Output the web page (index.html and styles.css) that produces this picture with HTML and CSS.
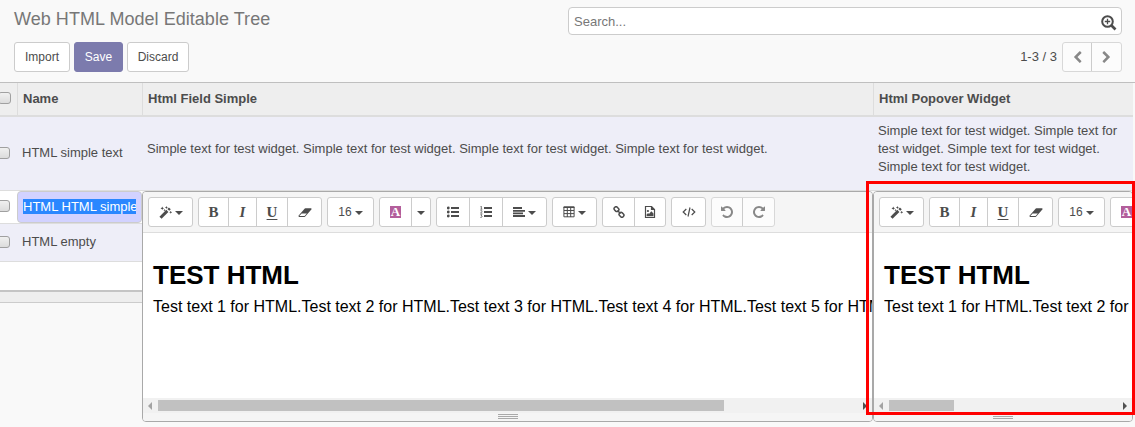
FILE: index.html
```html
<!DOCTYPE html>
<html lang="en">
<head>
<meta charset="utf-8">
<title>Web HTML Model Editable Tree</title>
<link rel="stylesheet" href="styles.css">
</head>
<body>
<svg class="sprite" aria-hidden="true">
  <symbol id="magic" viewBox="0 0 14 14"><path d="M1.600 12.600L9 5.200" stroke-width="3.200"/><path d="M10 4.200l1.700-1.700" stroke-width="2.800"/><path class="f" d="M3.500.6l.6 1.300 1.300.6-1.300.6-.6 1.300-.6-1.300L1.600 2.500l1.300-.6zM8 0l.5 1.100 1.100.5-1.100.5L8 3.200l-.5-1.100-1.100-.5 1.100-.5zM12.600 5.200l.5 1.100 1.100.5-1.100.5-.5 1.100-.5-1.100-1.100-.5 1.100-.5zM6 3.200l.4.900.9.400-.9.400-.4.900-.4-.9-.9-.4.900-.4z"/></symbol>
  <symbol id="eraser" viewBox="0 0 2048 1792"><path class="f" d="M960 1408l336-384h-768l-336 384h768zm1013-1077q15 34 9.500 71.500t-30.500 65.500l-896 1024q-38 44-96 44h-768q-38 0-69.500-20.500t-47.500-54.500q-15-34-9.500-71.500t30.500-65.500l896-1024q38-44 96-44h768q38 0 69.500 20.500t47.500 54.500z"/></symbol>
  <symbol id="ul" viewBox="0 0 12 12"><path class="f" d="M4 1h8v2H4zM4 5h8v2H4zM4 9h8v2H4z"/><circle class="f" cx="1.300" cy="2" r="1.400"/><circle class="f" cx="1.300" cy="6" r="1.400"/><circle class="f" cx="1.300" cy="10" r="1.400"/></symbol>
  <symbol id="ol" viewBox="0 0 12 12"><path class="f" d="M4 1h8v2H4zM4 5h8v2H4zM4 9h8v2H4z"/><path d="M.4.8L1.400.2v3M.4 3.200h2M.4 4.700h1.500v1L.5 7.200h1.900M.4 8.700h1.600L1.200 9.800q1 0 .9.900T.3 11.400" stroke-width=".7"/></symbol>
  <symbol id="align" viewBox="0 0 12 12"><path class="f" d="M0 1h9v2H0zM0 4h12v1.700H0zM0 6.500h10v1.700H0zM0 9h12v2H0z"/></symbol>
  <symbol id="table" viewBox="0 0 12 12"><path d="M.9 1h10.200v9.800H.9zM1 4.500h10M1 7.600h10M4.300 2v9M7.700 2v9" stroke-width="1"/><path class="f" d="M.6.500h10.800v1.500H.6z"/></symbol>
  <symbol id="link" viewBox="0 0 12 12"><rect x="1" y="1.300" width="5" height="3.800" rx="1.700" transform="rotate(45 3.500 3.200)" stroke-width="1.500"/><rect x="6" y="6.900" width="5" height="3.800" rx="1.700" transform="rotate(45 8.500 8.800)" stroke-width="1.500"/><path d="M4.500 4.500l3 3" stroke-width="1.500"/></symbol>
  <symbol id="image" viewBox="0 0 12 12"><path d="M1.500.5h6L10.500 3.500v8h-9zM7.500.5v3h3" stroke-width="1.200"/><path class="f" d="M2.600 10.200V8.500l1.500-1.500.9.900 2.300-2.600 2.200 2.200v2.700z"/><circle class="f" cx="3.900" cy="5" r="1.100"/></symbol>
  <symbol id="code" viewBox="0 0 14 12"><path d="M4.300 3L1.200 6l3.100 3M9.700 3l3.100 3-3.100 3M8 1.500L6 10.500" stroke-width="1.200"/></symbol>
  <symbol id="undo" viewBox="0 0 1792 1792"><path class="f" d="M1664 896q0 156-61 298t-164 245-245 164-298 61q-172 0-327-72.500t-264-204.500q-7-10-6.500-22.500t8.500-20.500l137-138q10-9 25-9 16 2 23 12 73 95 179 147t225 52q104 0 198.500-40.500t163.500-109.500 109.500-163.500 40.500-198.500-40.500-198.500-109.500-163.500-163.500-109.500-198.500-40.500q-98 0-188 35.500t-160 101.500l137 138q31 30 14 69-17 40-59 40h-448q-26 0-45-19t-19-45v-448q0-42 40-59 39-17 69 14l130 129q107-101 244.500-156.500t284.500-55.500q156 0 298 61t245 164 164 245 61 298z"/></symbol>
  <symbol id="left" viewBox="0 0 1792 1792"><path class="f" d="M1427 301l-531 531 531 531q19 19 19 45t-19 45l-166 166q-19 19-45 19t-45-19l-742-742q-19-19-19-45t19-45l742-742q19-19 45-19t45 19l166 166q19 19 19 45t-19 45z"/></symbol>
  <symbol id="zoom" viewBox="0 0 16 16"><circle cx="6.500" cy="6.500" r="5.300" stroke-width="2"/><path d="M10.500 10.500l4 4" stroke-width="2.600"/><path d="M6.500 3.800v5.400M3.800 6.500h5.400" stroke-width="1.300"/></symbol>
</svg>

<header class="panel">
  <div class="panel-row">
    <h1 class="title">Web HTML Model Editable Tree</h1>
    <div class="search"><span>Search...</span><svg class="ic zoom"><use href="#zoom"/></svg></div>
  </div>
  <div class="panel-row second">
    <div class="actions"><div class="btn import">Import</div><div class="btn save">Save</div><div class="btn discard">Discard</div></div>
    <div class="pager"><span>1-3 / 3</span><div class="group muted"><div class="b w28"><svg class="ic"><use href="#left"/></svg></div><div class="b w29"><svg class="ic flip"><use href="#left"/></svg></div></div></div>
  </div>
</header>

<main class="table">
  <div class="row head"><div class="cell check"><i class="box"></i></div><div class="cell">Name</div><div class="cell">Html Field Simple</div><div class="cell">Html Popover Widget</div></div>
  <div class="row first"><div class="cell check"><i class="box"></i></div><div class="cell label">HTML simple text</div><div class="cell simple">Simple text for test widget. Simple text for test widget. Simple text for test widget. Simple text for test widget.</div><div class="cell wrap">Simple text for test widget. Simple text for test widget. Simple text for test widget. Simple text for test widget.</div></div>
  <div class="lower">
    <div class="side">
      <div class="srow edit"><div class="check"><i class="box"></i></div><div class="input"><span class="sel">HTML HTML simple</span></div></div>
      <div class="srow odd"><div class="check"><i class="box"></i></div><div class="name">HTML empty</div></div>
      <div class="srow blank"></div>
      <div class="foot"></div>
    </div>

    <section class="editor one">
      <div class="toolbar">
        <div class="group"><div class="b w43"><svg class="ic"><use href="#magic"/></svg><i class="caret"></i></div></div>
        <div class="group"><div class="b w29 serif">B</div><div class="b w27 serif it">I</div><div class="b w30 serif un">U</div><div class="b w33"><svg class="ic er"><use href="#eraser"/></svg></div></div>
        <div class="group"><div class="b w45">16<i class="caret"></i></div></div>
        <div class="group"><div class="b w31"><span class="color">A</span></div><div class="b w18"><i class="caret solo"></i></div></div>
        <div class="group"><div class="b w32"><svg class="ic s12"><use href="#ul"/></svg></div><div class="b w32"><svg class="ic s12"><use href="#ol"/></svg></div><div class="b w43"><svg class="ic s12"><use href="#align"/></svg><i class="caret"></i></div></div>
        <div class="group"><div class="b w43"><svg class="ic s12"><use href="#table"/></svg><i class="caret"></i></div></div>
        <div class="group"><div class="b w31"><svg class="ic s12"><use href="#link"/></svg></div><div class="b w30"><svg class="ic s12"><use href="#image"/></svg></div></div>
        <div class="group"><div class="b w33"><svg class="ic code"><use href="#code"/></svg></div></div>
        <div class="group muted"><div class="b w30"><svg class="ic turn"><use href="#undo"/></svg></div><div class="b w31"><svg class="ic turn flip"><use href="#undo"/></svg></div></div>
      </div>
      <div class="doc"><h2>TEST HTML</h2><p>Test text 1 for HTML.Test text 2 for HTML.Test text 3 for HTML.Test text 4 for HTML.Test text 5 for HTML.</p></div>
      <div class="scroll"><i class="arrow back"></i><div class="track"><div class="thumb long"></div></div><i class="arrow fwd"></i></div>
      <div class="resize"><i class="grip"></i></div>
    </section>

    <section class="editor two">
      <div class="toolbar">
        <div class="group"><div class="b w43"><svg class="ic"><use href="#magic"/></svg><i class="caret"></i></div></div>
        <div class="group"><div class="b w29 serif">B</div><div class="b w27 serif it">I</div><div class="b w30 serif un">U</div><div class="b w33"><svg class="ic er"><use href="#eraser"/></svg></div></div>
        <div class="group"><div class="b w45">16<i class="caret"></i></div></div>
        <div class="group"><div class="b w31"><span class="color">A</span></div><div class="b w18"><i class="caret solo"></i></div></div>
      </div>
      <div class="doc"><h2>TEST HTML</h2><p>Test text 1 for HTML.Test text 2 for</p></div>
      <div class="scroll"><i class="arrow back"></i><div class="track"><div class="thumb short"></div></div><i class="arrow fwd"></i></div>
      <div class="resize"><i class="grip"></i></div>
    </section>
  </div>
</main>
<div class="highlight"></div>
</body>
</html>
```
FILE: styles.css
```css
* { box-sizing: border-box; }
body { margin: 0; height: 427px; overflow: hidden; position: relative; background: #f9f9f9; color: #4c4c4c; font: 13px/18px "Liberation Sans", Arial, sans-serif; }
.sprite { display: none; }
.ic { width: 13px; height: 13px; flex: none; fill: none; stroke: currentColor; }
.f { fill: currentColor; stroke: none; }
.flip { transform: scaleX(-1); }

.panel { height: 83px; padding: 7px 13px 0 14px; border-bottom: 1px solid #bfbfbf; }
.panel-row { display: flex; justify-content: space-between; height: 28px; }
.panel-row.second { height: 30px; margin-top: 7px; }
.title { margin: 0; font-size: 18px; font-weight: 400; line-height: 24px; letter-spacing: .04px; color: #777; }
.search { width: 554px; height: 28px; padding: 0 4px 0 5px; display: flex; align-items: center; justify-content: space-between; background: #fff; border: 1px solid #ccc; border-radius: 4px; color: #777; }
.search span { padding-top: 1px; }
.zoom { width: 16px; height: 16px; color: #4c4c4c; margin-top: 3px; }
.actions { display: flex; gap: 4px; }
.btn { height: 30px; border: 1px solid #ccc; border-radius: 3px; background: #fff; font-size: 12px; line-height: 28px; text-align: center; }
.import { width: 56px; }
.save { width: 49px; background: #7c7bad; border-color: #7c7bad; color: #fff; }
.discard { width: 62px; }
.pager { display: flex; align-items: center; gap: 5px; }

.group { display: flex; flex: none; height: 30px; border: 1px solid #ccc; border-radius: 3px; background: #fff; }
.b { display: flex; align-items: center; justify-content: center; flex: none; font-size: 12px; }
.b + .b { border-left: 1px solid #ccc; box-sizing: content-box; }
.muted { color: #888; background: #fcfcfc; border-color: #d8d8d8; }
.w18 { width: 18px; } .w27 { width: 27px; } .w28 { width: 28px; } .w29 { width: 29px; } .w30 { width: 30px; }
.w31 { width: 31px; } .w32 { width: 32px; } .w33 { width: 33px; } .w43 { width: 43px; } .w45 { width: 45px; }
.serif { font: bold 15px/28px "Liberation Serif", serif; }
.it { font-style: italic; }
.un { text-decoration: underline; text-underline-offset: 2px; text-decoration-thickness: 1px; }
.er { width: 14px; }
.code { width: 14px; height: 12px; }
.turn { width: 14px; height: 14px; }
.s12 { width: 12px; height: 12px; }
.caret { border: 4px solid transparent; border-top-color: currentColor; border-bottom: 0; margin: 2px 0 0 3px; }
.caret.solo { margin-left: 0; }
.color { width: 11px; height: 12px; background: #b35e9b; color: #fff; font: bold 13px/12px "Liberation Serif", serif; text-align: center; }

.table { width: 1133px; }
.row { display: grid; grid-template-columns: 17px 125px 731px 260px; }
.cell { padding-left: 4px; border-left: 1px solid transparent; display: flex; align-items: center; }
.head { height: 34px; background: #eee; border-bottom: 2px solid #ddd; font-weight: bold; }
.head .cell { padding-left: 5px; border-left-color: #ddd; }
.row .check, .head .check { padding: 0; border: 0; }
.box { display: block; width: 13px; height: 12px; margin-left: -3px; border: 1px solid #a0a0a0; border-radius: 3px; background: linear-gradient(#f0f0f0, #dcdcdc); }
.head .box { margin-left: -2px; }
.head .check { padding-bottom: 2px; }
.first { height: 74px; background: #eeeef8; border-bottom: 1px solid #ddd; }
.first .check, .first .label { padding-bottom: 2px; }
.first .simple { padding-bottom: 10px; }
.first .wrap { padding-right: 10px; padding-bottom: 10px; }
.lower { display: flex; height: 231px; }
.side { width: 142px; flex: none; }
.srow { display: flex; align-items: center; background: #fff; border-bottom: 1px solid #ddd; }
.srow .check { width: 17px; }
.edit { height: 33px; padding-bottom: 1px; }
.edit .check { padding-bottom: 1px; }
.input { width: 125px; height: 32px; padding: 7px 5px; background: #d2d2ff; border: 1px solid #ccc; border-radius: 4px; overflow: hidden; }
.sel { display: block; width: 113px; height: 15px; line-height: 15px; overflow: hidden; white-space: nowrap; background: #2a87ff; color: #fff; }
.odd { height: 38px; background: #eeeef8; padding-bottom: 2px; }
.name { padding-left: 5px; }
.blank { height: 28px; border: 0; }
.foot { height: 13px; background: #eee; border-top: 2px solid #c4c4c4; border-bottom: 1px solid #ccc; }

.editor { height: 231px; display: flex; flex-direction: column; border: 1px solid #a9a9a9; border-radius: 4px; overflow: hidden; background: #fff; flex: none; }
.one { width: 731px; }
.two { width: 260px; }
.toolbar { display: flex; gap: 5px; height: 41px; padding: 5px; background: #f5f5f5; border-bottom: 1px solid #ddd; flex: none; }
.doc { flex: 1; padding: 27px 0 0 10px; color: #000; white-space: nowrap; overflow: hidden; }
.doc h2 { margin: 0; font-size: 26px; line-height: 30px; }
.doc p { margin: 6px 0 0; font-size: 16px; line-height: 22px; }
.scroll { display: flex; align-items: center; height: 15px; flex: none; background: #f1f1f1; padding: 0 5px; }
.track { flex: 1; padding: 0 6px; }
.thumb { height: 11px; background: #c1c1c1; }
.long { width: 566px; }
.short { width: 65px; }
.arrow { border: 4px solid transparent; }
.back { border-left: 0; border-right-color: #a3a3a3; }
.fwd { border-right: 0; border-left-color: #505050; }
.resize { height: 8px; flex: none; background: #f5f5f5; display: flex; justify-content: center; padding-top: 1px; }
.grip { width: 20px; height: 5px; border: solid #a9a9a9; border-width: 1px 0; background: linear-gradient(transparent 1px, #a9a9a9 1px, #a9a9a9 2px, transparent 2px); }
.highlight { position: absolute; left: 866px; top: 181px; width: 269px; height: 234px; border: 3px solid #f00; }
```
